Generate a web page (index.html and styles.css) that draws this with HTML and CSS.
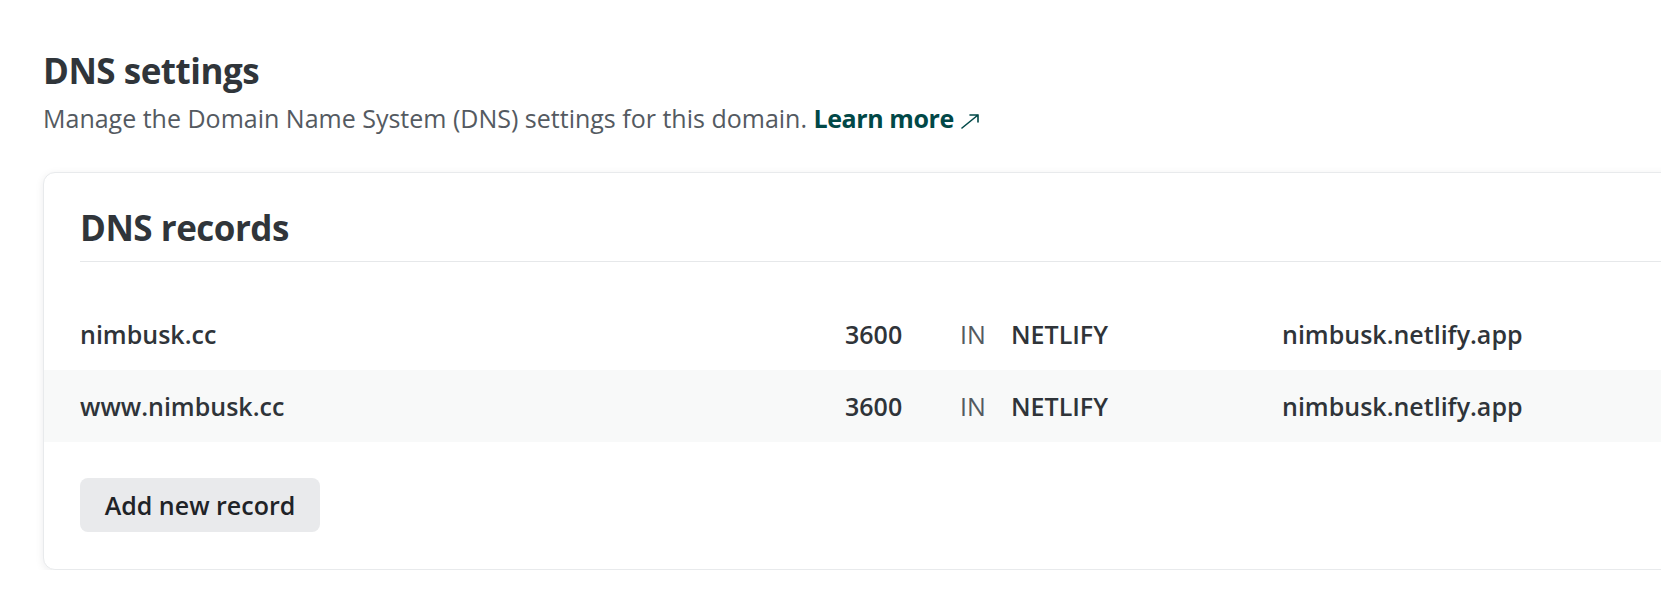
FILE: index.html
```html
<!DOCTYPE html>
<html lang="en">
<head>
<meta charset="utf-8">
<title>DNS settings</title>
<link rel="stylesheet" href="styles.css">
</head>
<body>
<main class="page">
  <h1 class="title">DNS settings</h1>
  <p class="subtitle">Manage the Domain Name System (DNS) settings for this domain. <a class="learn" href="#">Learn more<svg class="ext" width="20" height="16" viewBox="0 0 20 16" aria-hidden="true"><path d="M2 15 L18 2 M10 2 H18 V9" fill="none" stroke="currentColor" stroke-width="1.6" stroke-linecap="round" stroke-linejoin="round"/></svg></a></p>

  <section class="card">
    <h2 class="card-title">DNS records</h2>
    <div class="records">
      <div class="record">
        <span class="name">nimbusk.cc</span>
        <span class="ttl">3600</span>
        <span class="cls">IN</span>
        <span class="type">NETLIFY</span>
        <span class="value">nimbusk.netlify.app</span>
      </div>
      <div class="record alt">
        <span class="name">www.nimbusk.cc</span>
        <span class="ttl">3600</span>
        <span class="cls">IN</span>
        <span class="type">NETLIFY</span>
        <span class="value">nimbusk.netlify.app</span>
      </div>
    </div>
    <div class="actions">
      <button class="btn" type="button">Add new record</button>
    </div>
  </section>
</main>
</body>
</html>
```
FILE: styles.css
```css
html, body {
  margin: 0;
  padding: 0;
  background: #ffffff;
  overflow: hidden;
}

body {
  font-family: "Open Sans", "Noto Sans", "Liberation Sans", sans-serif;
  color: #2f3439;
}

.page {
  padding: 49px 0 0 43px;
}

.title {
  margin: 0;
  font-size: 35px;
  line-height: 43px;
  font-weight: 700;
  letter-spacing: -0.5px;
  color: #30353a;
}

.subtitle {
  margin: 8px 0 0;
  font-size: 25px;
  line-height: 36px;
  color: #545a61;
}

.learn {
  color: #014847;
  font-weight: 700;
  letter-spacing: -0.4px;
  text-decoration: none;
}

.ext {
  margin-left: 6px;
  vertical-align: -1px;
}

.card {
  margin-top: 36px;
  width: 1700px;
  background: #ffffff;
  border: 1px solid #e8eaec;
  border-radius: 12px;
  box-shadow: 0 2px 8px rgba(20, 30, 40, 0.08);
  padding: 33px 0 37px;
}

.card-title {
  margin: 0 0 0 36px;
  font-size: 35px;
  line-height: 43px;
  font-weight: 700;
  letter-spacing: -0.5px;
  color: #30353a;
  padding-bottom: 12px;
  border-bottom: 1px solid #e6e8ea;
}

.records {
  padding-top: 36px;
}

.record {
  display: grid;
  grid-template-columns: 765px 115px 51px 271px 1fr;
  align-items: center;
  height: 72px;
  padding-left: 36px;
  font-size: 25px;
  line-height: 36px;
  font-weight: 600;
  color: #2f3439;
}

.record.alt {
  background: #f8f9f9;
}

.record .cls {
  font-weight: 400;
  color: #545a61;
}

.actions {
  padding: 36px 0 0 36px;
}

.btn {
  font-family: inherit;
  font-size: 25px;
  line-height: 36px;
  font-weight: 600;
  color: #1f2327;
  background: #e9eaec;
  border: 0;
  border-radius: 8px;
  padding: 9px 24px;
  width: 240px;
  cursor: pointer;
}
```
